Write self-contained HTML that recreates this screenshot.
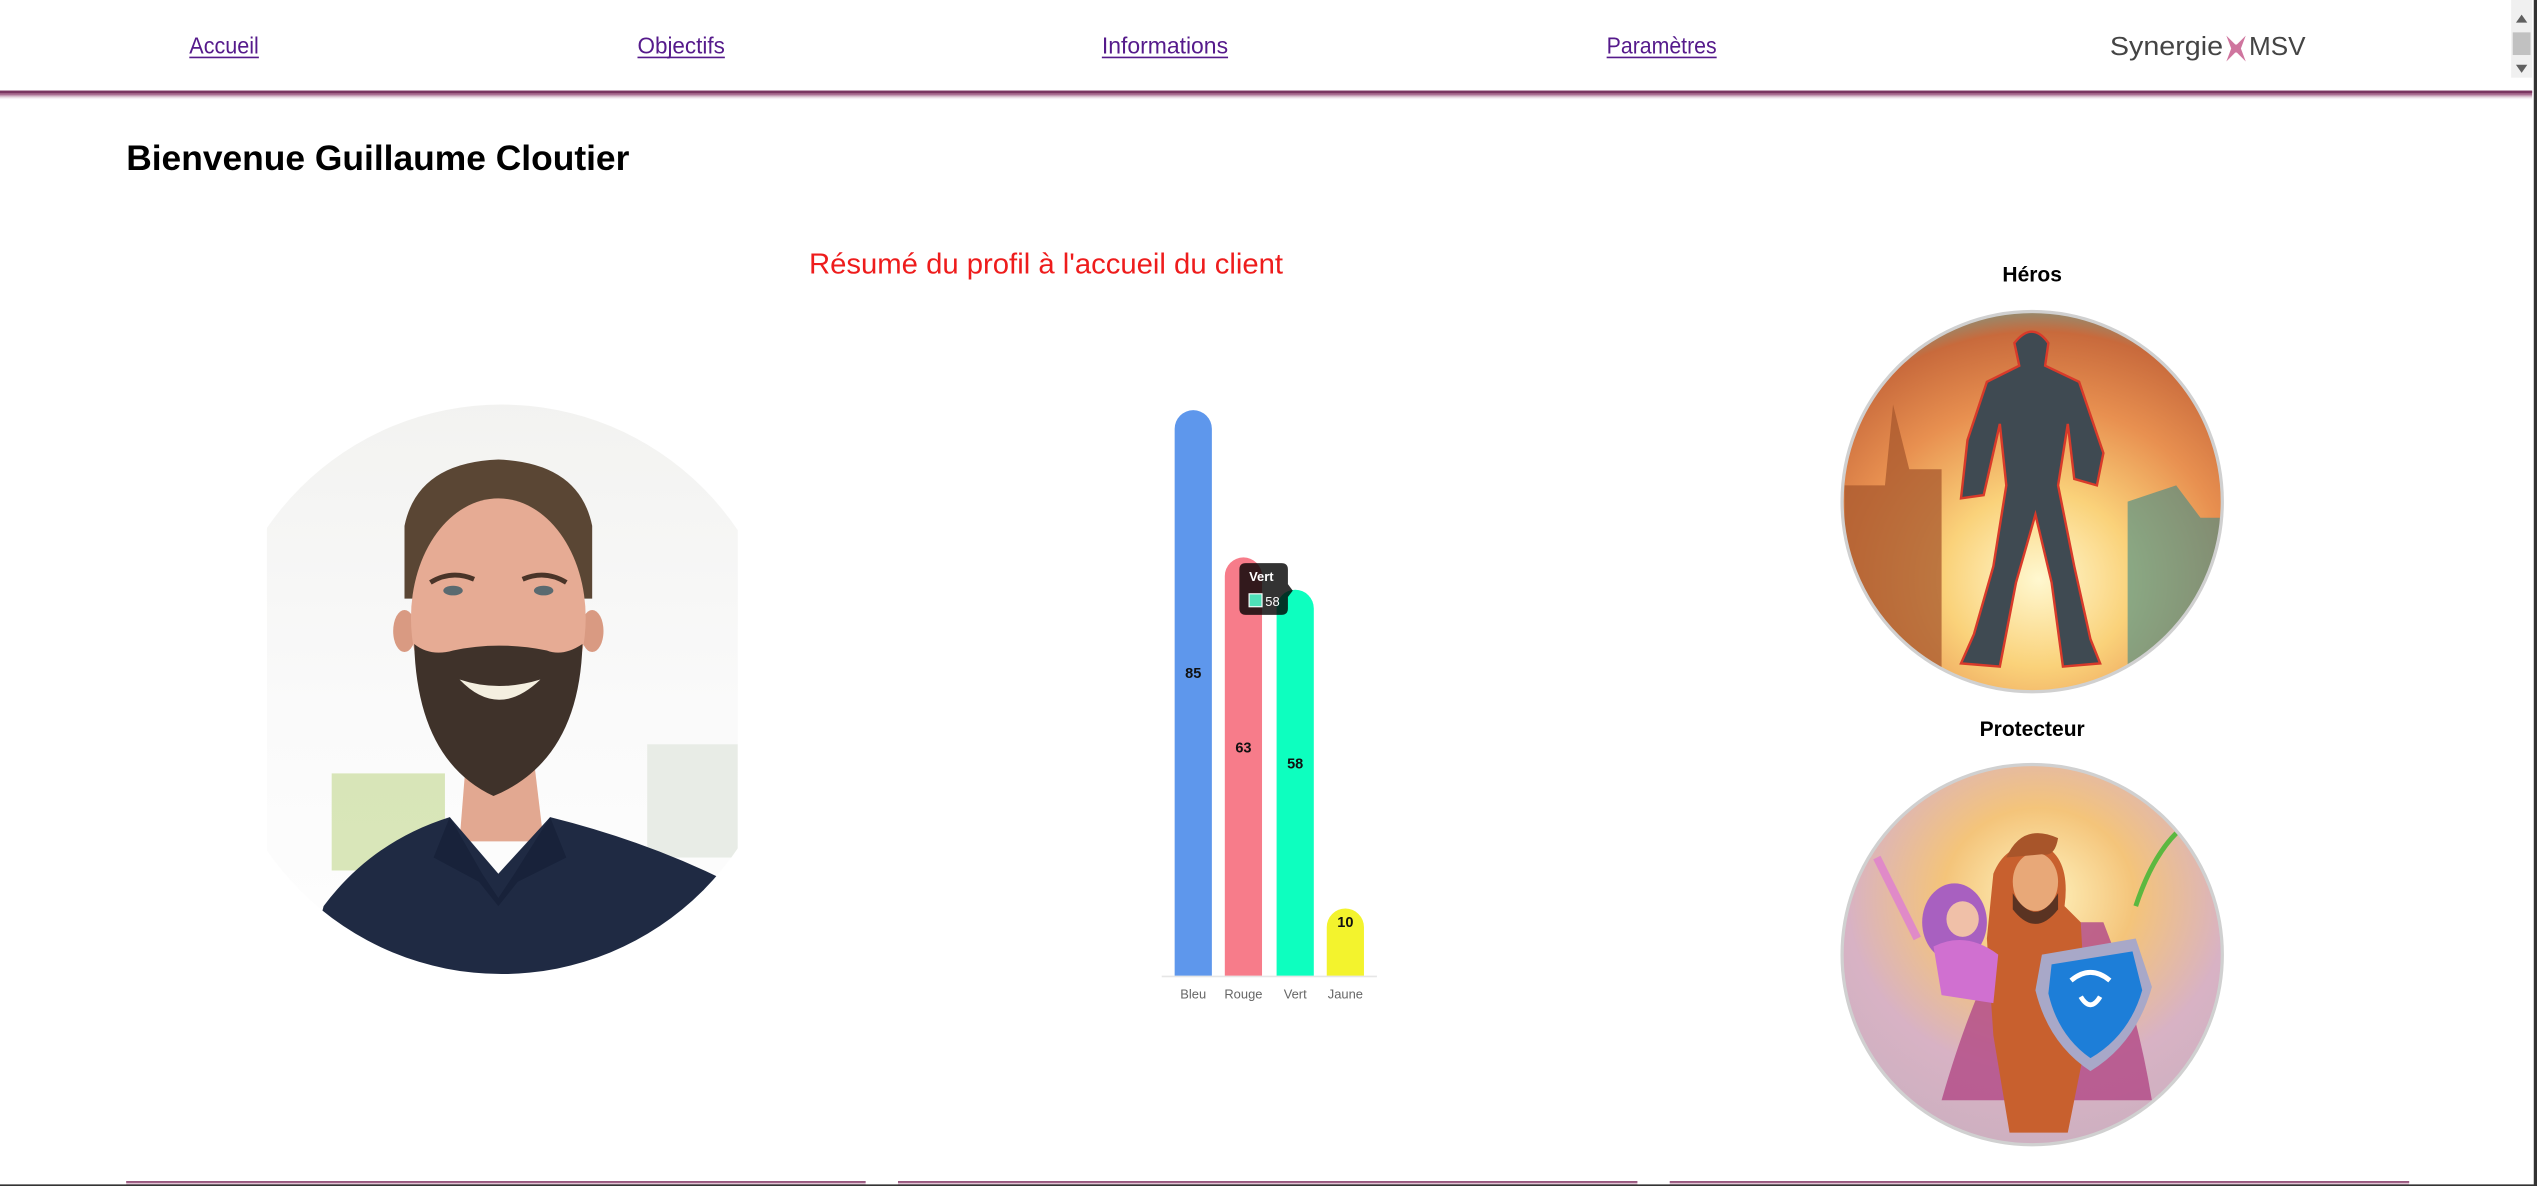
<!DOCTYPE html>
<html><head><meta charset="utf-8"><style>
html,body{margin:0;padding:0;background:#fff;overflow:hidden}
svg{display:block}
text{font-family:"Liberation Sans",sans-serif}
</style></head><body>
<svg width="2537" height="1186" viewBox="0 0 1568 733" xmlns="http://www.w3.org/2000/svg">
<defs>
<linearGradient id="nb" x1="0" y1="0" x2="0" y2="1"><stop offset="0" stop-color="#8b4570"/><stop offset="0.4" stop-color="#a86a8e"/><stop offset="1" stop-color="#fff" stop-opacity="0"/></linearGradient>
<clipPath id="pc"><circle cx="310" cy="426" r="176"/></clipPath>
<clipPath id="pr"><rect x="165" y="240" width="291" height="380"/></clipPath>
<linearGradient id="pbg" x1="0" y1="0" x2="0" y2="1"><stop offset="0" stop-color="#f2f2f0"/><stop offset="0.5" stop-color="#fafafa"/><stop offset="1" stop-color="#fff"/></linearGradient>
<radialGradient id="h1" cx="0.5" cy="0.7" r="0.75"><stop offset="0" stop-color="#fff8d0"/><stop offset="0.3" stop-color="#fad27a"/><stop offset="0.6" stop-color="#e89050"/><stop offset="0.85" stop-color="#c86a3c"/><stop offset="1" stop-color="#5ab0a8"/></radialGradient>
<radialGradient id="h2" cx="0.5" cy="0.35" r="0.65"><stop offset="0" stop-color="#fff4c0"/><stop offset="0.35" stop-color="#f4c47a"/><stop offset="0.7" stop-color="#d8b2c4"/><stop offset="1" stop-color="#cdb0c0"/></radialGradient>
<clipPath id="c1"><circle cx="1256" cy="310" r="117"/></clipPath>
<clipPath id="c2"><circle cx="1256" cy="590" r="117"/></clipPath>
</defs>

<g fill="#551a8b" font-size="14">
<text x="117" y="33" textLength="43" lengthAdjust="spacingAndGlyphs">Accueil</text>
<text x="394" y="33" textLength="54" lengthAdjust="spacingAndGlyphs">Objectifs</text>
<text x="681" y="33" textLength="78" lengthAdjust="spacingAndGlyphs">Informations</text>
<text x="993" y="33" textLength="68" lengthAdjust="spacingAndGlyphs">Paramètres</text>
<rect x="117" y="35" width="43" height="1"/><rect x="394" y="35" width="54" height="1"/><rect x="681" y="35" width="78" height="1"/><rect x="993" y="35" width="68" height="1"/>
</g>
<text x="1304" y="34" font-size="16" fill="#444" textLength="70" lengthAdjust="spacingAndGlyphs">Synergie</text>
<g fill="#c0487e" opacity="0.75"><path d="M1376 22 L1382 28 L1388 22 L1385 30 L1388 38 L1382 32 L1376 38 L1379 30Z"/><circle cx="1382" cy="30" r="2.5"/></g>
<text x="1390" y="34" font-size="16" fill="#444" textLength="35" lengthAdjust="spacingAndGlyphs">MSV</text>
<rect x="1552" y="0" width="13" height="48" fill="#f0f0f0"/><rect x="1553" y="20" width="11" height="14" fill="#c1c1c1"/>
<path d="M1555 14 L1558.5 9 L1562 14Z M1555 40 L1558.5 45 L1562 40Z" fill="#606060"/>
<rect x="0" y="56" width="1565" height="6" fill="url(#nb)"/>
<rect x="0" y="56" width="1565" height="1.5" fill="#7a3560"/>
<rect x="1566" y="0" width="2" height="733" fill="#333"/>

<text x="78" y="105" font-size="22" font-weight="bold" fill="#000" textLength="311" lengthAdjust="spacingAndGlyphs">Bienvenue Guillaume Cloutier</text>
<text x="500" y="169" font-size="18" fill="#ee1c1c" textLength="293" lengthAdjust="spacingAndGlyphs">Résumé du profil à l'accueil du client</text>

<g clip-path="url(#pr)"><g clip-path="url(#pc)">
<rect x="130" y="240" width="360" height="400" fill="url(#pbg)"/>
<rect x="205" y="478" width="70" height="60" fill="#cfe0a8" opacity="0.8"/>
<rect x="400" y="460" width="56" height="70" fill="#e8ece6"/>
<path d="M250 325 Q258 286 308 284 Q358 286 366 325 L366 370 L250 370Z" fill="#5a4634"/>
<ellipse cx="250" cy="390" rx="7" ry="13" fill="#d99a82"/><ellipse cx="366" cy="390" rx="7" ry="13" fill="#d99a82"/>
<path d="M288 470 L330 470 L336 520 L284 520Z" fill="#e2a891"/>
<ellipse cx="308" cy="382" rx="54" ry="74" fill="#e6ab94"/>
<path d="M256 398 Q258 470 305 492 Q358 470 360 398 Q348 406 338 402 Q308 396 280 402 Q266 406 256 398Z" fill="#3f322a"/>
<path d="M284 420 Q308 445 334 420 Q308 428 284 420Z" fill="#f4efe0"/>
<path d="M266 360 Q279 352 293 358 M323 358 Q337 352 350 360" stroke="#4a3428" stroke-width="3" fill="none"/>
<ellipse cx="280" cy="365" rx="6" ry="3" fill="#5a6a70"/><ellipse cx="336" cy="365" rx="6" ry="3" fill="#5a6a70"/>
<path d="M200 560 Q230 520 278 505 L308 540 L340 505 Q400 520 450 545 L460 640 L180 640Z" fill="#1f2a43"/>
<path d="M278 505 L298 540 L308 555 L318 540 L340 505 L350 530 L320 545 L308 560 L296 545 L268 530Z" fill="#18223a"/>
</g></g>

<line x1="718" y1="603.5" x2="851" y2="603.5" stroke="#e6e6e6"/>
<path d="M726 603 V265 A11.5 11.5 0 0 1 749 265 V603Z" fill="#5e97ec"/>
<path d="M757 603 V356 A11.5 11.5 0 0 1 780 356 V603Z" fill="#f77c8a"/>
<path d="M789 603 V376 A11.5 11.5 0 0 1 812 376 V603Z" fill="#0dffbf"/>
<path d="M820 603 V573 A11.5 11.5 0 0 1 843 573 V603Z" fill="#f3f32d"/>
<g font-size="9" font-weight="bold" fill="#111" text-anchor="middle">
<text x="737.5" y="419">85</text><text x="768.5" y="465">63</text><text x="800.5" y="475">58</text><text x="831.5" y="573">10</text>
</g>
<g font-size="8" fill="#666" text-anchor="middle">
<text x="737.5" y="617">Bleu</text><text x="768.5" y="617">Rouge</text><text x="800.5" y="617">Vert</text><text x="831.5" y="617">Jaune</text>
</g>
<path d="M770 348 H792 Q796 348 796 352 V361 L799 365 L796 369 V376 Q796 380 792 380 H770 Q766 380 766 376 V352 Q766 348 770 348Z" fill="#000" opacity="0.8"/>
<text x="772" y="359" font-size="8" font-weight="bold" fill="#fff">Vert</text>
<rect x="772" y="367" width="8" height="8" fill="#4fe0b8" stroke="#fff" stroke-width="0.7"/>
<text x="782" y="374.5" font-size="8" fill="#fff">58</text>

<text x="1256" y="174" font-size="13" font-weight="bold" text-anchor="middle" fill="#000">Héros</text>
<g clip-path="url(#c1)">
<rect x="1130" y="190" width="260" height="240" fill="url(#h1)"/>
<path d="M1140 300 L1165 300 L1170 250 L1180 290 L1200 290 L1200 430 L1140 430Z" fill="#a8582e" opacity="0.75"/>
<path d="M1315 310 L1345 300 L1360 320 L1372 320 L1372 430 L1315 430Z" fill="#3f8a88" opacity="0.6"/>
<path d="M1245 212 Q1256 198 1266 212 L1264 226 L1285 236 L1300 280 L1296 300 L1282 296 L1278 262 L1272 300 L1282 350 L1292 395 L1298 410 L1275 412 L1268 360 L1258 318 L1246 360 L1236 412 L1212 410 L1220 392 L1232 350 L1240 300 L1236 262 L1226 306 L1212 308 L1216 272 L1228 236 L1248 226Z" fill="#3f4a52" stroke="#d83a2a" stroke-width="1.5"/>
</g>
<circle cx="1256" cy="310" r="117.5" fill="none" stroke="#d0d0d0" stroke-width="2"/>

<text x="1256" y="455" font-size="13" font-weight="bold" text-anchor="middle" fill="#000">Protecteur</text>
<g clip-path="url(#c2)">
<rect x="1130" y="470" width="260" height="240" fill="url(#h2)"/>
<path d="M1200 680 Q1220 610 1245 570 L1300 570 Q1320 620 1330 680Z" fill="#b44f8a" opacity="0.85"/>
<path d="M1232 540 Q1240 520 1262 522 Q1280 530 1276 560 L1286 570 L1290 640 L1278 700 L1242 700 L1232 640 L1228 580Z" fill="#c8602e"/>
<ellipse cx="1258" cy="545" rx="14" ry="18" fill="#e8a878"/>
<path d="M1244 552 Q1258 575 1272 552 L1272 562 Q1258 580 1244 562Z" fill="#5a3322"/>
<path d="M1240 530 Q1250 508 1272 518 Q1270 530 1262 528Z" fill="#a8552a"/>
<ellipse cx="1208" cy="570" rx="20" ry="24" fill="#a860c0"/>
<ellipse cx="1213" cy="568" rx="10" ry="11" fill="#f0c0a8"/>
<path d="M1195 585 Q1215 575 1235 590 L1232 620 L1200 615Z" fill="#d070d0"/>
<path d="M1262 590 L1320 580 L1330 610 Q1320 645 1292 662 Q1266 645 1258 612Z" fill="#a8a8c8"/>
<path d="M1268 596 L1318 588 L1324 612 Q1316 640 1292 654 Q1272 640 1266 614Z" fill="#1d7ed8"/>
<path d="M1280 606 Q1292 596 1304 606 M1286 616 Q1292 626 1298 616" stroke="#fff" stroke-width="3" fill="none"/>
<path d="M1320 560 Q1330 530 1345 515" stroke="#5cb840" stroke-width="3" fill="none"/>
<path d="M1160 530 L1185 580" stroke="#e08ac8" stroke-width="5"/>
</g>
<circle cx="1256" cy="590" r="117.5" fill="none" stroke="#d0d0d0" stroke-width="2"/>

<g fill="#e3c2d4"><rect x="78" y="730" width="457" height="3"/><rect x="555" y="730" width="457" height="3"/><rect x="1032" y="730" width="457" height="3"/></g>
<g fill="#8b4570"><rect x="78" y="730" width="457" height="1"/><rect x="555" y="730" width="457" height="1"/><rect x="1032" y="730" width="457" height="1"/></g>
<rect x="0" y="732" width="1568" height="1" fill="#333"/>
</svg>
</body></html>
